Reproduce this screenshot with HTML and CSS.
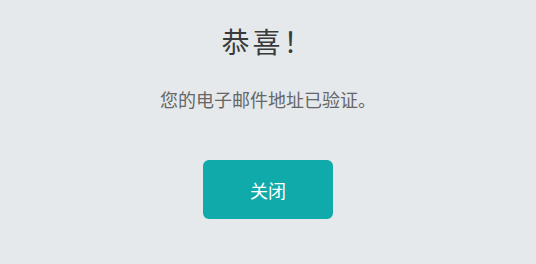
FILE: index.html
```html
<!DOCTYPE html>
<html lang="zh-CN">
<head>
    <meta charset="UTF-8">
    <meta name="viewport" content="width=device-width, initial-scale=1.0">
    <title>恭喜</title>
    <link rel="stylesheet" href="styles.css">
</head>
<body>
    <div class="dialog">
        <h1 class="title">恭喜！</h1>
        <p class="message">您的电子邮件地址已验证。</p>
        <button class="btn-close">关闭</button>
    </div>
</body>
</html>
```

FILE: styles.css
```css
body {
    margin: 0;
    padding: 0;
    background-color: #e5e9ec;
    font-family: "Noto Sans CJK SC", "Noto Sans", sans-serif;
    height: 264px;
}

.dialog {
    display: flex;
    flex-direction: column;
    align-items: center;
    padding-top: 21px;
}

.title {
    margin: 0;
    font-size: 28px;
    font-weight: 400;
    line-height: 40px;
    letter-spacing: 3px;
    color: #3a3a3a;
}

.message {
    margin: 26px 0 0 0;
    font-size: 18px;
    line-height: 24px;
    color: #666666;
}

.btn-close {
    margin-top: 49px;
    width: 130px;
    height: 59px;
    border: none;
    border-radius: 6px;
    background-color: #10aaaa;
    color: #ffffff;
    font-family: inherit;
    font-size: 18px;
    cursor: pointer;
}
```
